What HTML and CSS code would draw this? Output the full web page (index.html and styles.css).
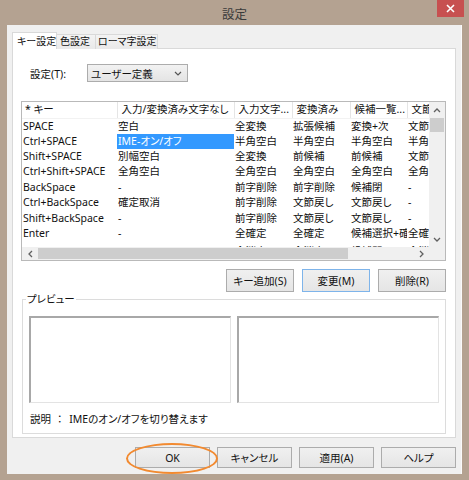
FILE: index.html
```html
<!DOCTYPE html>
<html lang="ja">
<head>
    <meta charset="UTF-8">
    <title>設定</title>
    <link rel="stylesheet" href="styles.css">
</head>
<body>
    <div class="window">
        <div class="titlebar">
            <span></span>
            <div class="title">設定</div>
            <div class="close">
                <svg width="9" height="9" viewBox="0 0 9 9"><path d="M1 1L8 8M8 1L1 8" stroke="#fff" stroke-width="1.6" fill="none"/></svg>
            </div>
        </div>
        <div class="client">
            <div class="tabs">
                <div class="tab active">キー設定</div>
                <div class="tab color">色設定</div>
                <div class="tab roma">ローマ字設定</div>
            </div>
            <div class="panel">
                <div class="setting-row">
                    <label class="setting-label">設定(T):</label>
                    <div class="select">
                        <span>ユーザー定義</span>
                        <svg width="8" height="5" viewBox="0 0 8 5"><path d="M1 1L4 4L7 1" stroke="#555" stroke-width="1.2" fill="none"/></svg>
                    </div>
                </div>

                <div class="listview">
                    <div class="lv-body">
                        <table class="keys">
                            <colgroup>
                                <col style="width:95px">
                                <col style="width:117px">
                                <col style="width:58px">
                                <col style="width:58px">
                                <col style="width:57px">
                                <col style="width:60px">
                            </colgroup>
                            <thead>
                                <tr>
                                    <th>* キー</th>
                                    <th>入力/変換済み文字なし</th>
                                    <th>入力文字...</th>
                                    <th>変換済み</th>
                                    <th>候補一覧...</th>
                                    <th>文節変換中</th>
                                </tr>
                            </thead>
                            <tbody>
                                <tr><td>SPACE</td><td>空白</td><td>全変換</td><td>拡張候補</td><td>変換+次</td><td>文節変換</td></tr>
                                <tr><td>Ctrl+SPACE</td><td class="sel">IME-オン/オフ</td><td>半角空白</td><td>半角空白</td><td>半角空白</td><td>半角空白</td></tr>
                                <tr><td>Shift+SPACE</td><td>別幅空白</td><td>全変換</td><td>前候補</td><td>前候補</td><td>文節変換</td></tr>
                                <tr><td>Ctrl+Shift+SPACE</td><td>全角空白</td><td>全角空白</td><td>全角空白</td><td>全角空白</td><td>全角空白</td></tr>
                                <tr><td>BackSpace</td><td>-</td><td>前字削除</td><td>前字削除</td><td>候補閉</td><td>-</td></tr>
                                <tr><td>Ctrl+BackSpace</td><td>確定取消</td><td>前字削除</td><td>文節戻し</td><td>文節戻し</td><td>-</td></tr>
                                <tr><td>Shift+BackSpace</td><td>-</td><td>前字削除</td><td>文節戻し</td><td>文節戻し</td><td>-</td></tr>
                                <tr><td>Enter</td><td>-</td><td>全確定</td><td>全確定</td><td>候補選択+確定</td><td>全確定</td></tr>
                                <tr class="last"><td></td><td></td><td>全消去</td><td>全消去</td><td>候補閉</td><td>全消去</td></tr>
                            </tbody>
                        </table>
                    </div>
                    <div class="vscroll">
                        <div class="arrow"><svg width="8" height="5" viewBox="0 0 8 5"><path d="M1 4L4 1L7 4" stroke="#606060" stroke-width="1.3" fill="none"/></svg></div>
                        <div class="vthumb"></div>
                        <div class="track"></div>
                        <div class="arrow"><svg width="8" height="5" viewBox="0 0 8 5"><path d="M1 1L4 4L7 1" stroke="#606060" stroke-width="1.3" fill="none"/></svg></div>
                    </div>
                    <div class="hscroll">
                        <div class="arrow"><svg width="5" height="8" viewBox="0 0 5 8"><path d="M4 1L1 4L4 7" stroke="#606060" stroke-width="1.3" fill="none"/></svg></div>
                        <div class="hthumb"></div>
                        <div class="track"></div>
                        <div class="arrow"><svg width="5" height="8" viewBox="0 0 5 8"><path d="M1 1L4 4L1 7" stroke="#606060" stroke-width="1.3" fill="none"/></svg></div>
                    </div>
                    <div class="corner"></div>
                </div>

                <div class="list-buttons">
                    <button class="btn small">キー追加(S)</button>
                    <button class="btn small focus">変更(M)</button>
                    <button class="btn small">削除(R)</button>
                </div>

                <fieldset class="preview">
                    <legend>プレビュー</legend>
                    <div class="panes">
                        <div class="pane"></div>
                        <div class="pane"></div>
                    </div>
                    <p class="desc">説明<span class="colon">：</span>IMEのオン/オフを切り替えます</p>
                </fieldset>
            </div>

            <div class="dialog-buttons">
                <button class="btn wide ok">OK</button>
                <button class="btn wide">キャンセル</button>
                <button class="btn wide">適用(A)</button>
                <button class="btn wide">ヘルプ</button>
            </div>
        </div>
    </div>
</body>
</html>
```

FILE: styles.css
```css
* {
    box-sizing: border-box;
}

body {
    margin: 0;
    background: #b4a291;
    font-family: "Noto Sans", "Noto Sans CJK JP", sans-serif;
    font-size: 10.5px;
    font-feature-settings: "palt" 1;
    color: #111;
}

.window {
    width: 469px;
    height: 480px;
}

/* title bar */
.titlebar {
    height: 25px;
    display: grid;
    grid-template-columns: 1fr auto 1fr;
    align-items: start;
}

.title {
    margin-top: 6px;
    font-family: "Noto Sans CJK JP", sans-serif;
    font-size: 12.5px;
    line-height: 16px;
    color: #3a3a3a;
}

.close {
    justify-self: end;
    width: 27px;
    height: 17px;
    margin-right: 5px;
    background: #c75050;
    display: flex;
    align-items: center;
    justify-content: center;
}

/* client area */
.client {
    margin: 0 7px;
    height: 449px;
    background: #f0f0f0;
    padding: 7px 5px 0;
    border-right: 1px solid #fafafa;
}

.tabs {
    display: flex;
    align-items: flex-end;
    height: 17px;
    margin-bottom: -1px;
    font-size: 10px;
}

.tab {
    height: 15px;
    border: 1px solid #d9d9d9;
    border-bottom: none;
    background: linear-gradient(#f3f3f3, #e9e9e9);
    padding-left: 3px;
    margin-left: -1px;
    line-height: 13px;
    white-space: nowrap;
}

.tab.active {
    position: relative;
    z-index: 1;
    width: 45px;
    height: 17px;
    margin-left: 0;
    background: #fff;
    padding-left: 4px;
    line-height: 16px;
}

.tab.color {
    width: 40px;
}

.tab.roma {
    width: 63px;
    padding-left: 2px;
}

.panel {
    height: 390px;
    background: #fff;
    border: 1px solid #d9d9d9;
    padding: 0 9px 0 8px;
}

.setting-row {
    display: flex;
    align-items: center;
    margin-top: 15px;
    height: 18px;
}

.setting-label {
    width: 57px;
    margin-left: 9px;
}

.select {
    width: 101px;
    height: 18px;
    border: 1px solid #acacac;
    background: linear-gradient(#f2f2f2, #e4e4e4);
    padding: 0 5px 0 3px;
    display: flex;
    align-items: center;
    justify-content: space-between;
}

/* list view */
.listview {
    margin-top: 19px;
    height: 160px;
    border: 1px solid #b9b9b9;
    display: grid;
    grid-template-columns: 1fr 16px;
    grid-template-rows: 1fr 13px;
}

.lv-body {
    overflow: hidden;
}

.keys {
    border-collapse: collapse;
    table-layout: fixed;
    width: 445px;
}

.keys th {
    height: 16px;
    padding: 0 0 0 4px;
    font-weight: normal;
    text-align: left;
    white-space: nowrap;
    overflow: hidden;
    line-height: 15px;
    border-right: 1px solid #e5e5e5;
    border-bottom: 1px solid #f2f2f2;
}

.keys th:first-child {
    padding-left: 3px;
}

.keys td {
    height: 15.4px;
    padding: 0 0 0 1px;
    line-height: 15px;
    white-space: nowrap;
    overflow: hidden;
}

.keys tr.last td {
    padding-top: 3px;
    vertical-align: top;
}

.keys td.sel {
    background: #3399ff;
    color: #fff;
}

.vscroll {
    background: #f0f0f0;
    display: flex;
    flex-direction: column;
}

.vscroll .arrow {
    height: 16px;
    display: flex;
    align-items: center;
    justify-content: center;
}

.vthumb {
    height: 14px;
    margin: 0 1px;
    background: #cdcdcd;
}

.track {
    flex: 1;
}

.hscroll {
    background: #f0f0f0;
    display: flex;
}

.hscroll .arrow {
    width: 16px;
    display: flex;
    align-items: center;
    justify-content: center;
}

.hthumb {
    width: 310px;
    margin: 1px 0;
    background: #cdcdcd;
}

.corner {
    background: #f0f0f0;
}

/* buttons */
.btn {
    border: 1px solid #acacac;
    background: linear-gradient(#f0f0f0, #e5e5e5);
    font: inherit;
    color: #111;
    padding: 0;
}

.btn.focus {
    border-color: #7eb4ea;
}

.list-buttons {
    display: flex;
    justify-content: flex-end;
    gap: 8px;
    margin-top: 8px;
}

.btn.small {
    width: 68px;
    height: 23px;
}

/* preview group */
.preview {
    margin: 1px 0 0 1px;
    border: 1px solid #dcdcdc;
    padding: 11px 6px 8px;
}

.preview legend {
    padding: 0 1px;
    margin-left: -3px;
    line-height: 12px;
}

.panes {
    display: grid;
    grid-template-columns: 1fr 1fr;
    gap: 6px;
}

.pane {
    height: 87px;
    background: #fff;
    border-top: 2px solid #a8a8a8;
    border-left: 2px solid #a8a8a8;
    border-right: 1px solid #e3e3e3;
    border-bottom: 1px solid #e3e3e3;
}

.desc {
    margin: 10px 0 0 1px;
    line-height: 12px;
}

.colon {
    margin: 0 7px 0 6px;
}

.dialog-buttons {
    display: flex;
    justify-content: flex-end;
    gap: 7px;
    margin-top: 9px;
}

.btn.wide {
    width: 75px;
    height: 21px;
}

.btn.ok {
    position: relative;
}

.btn.ok::after {
    content: '';
    position: absolute;
    left: -10px;
    top: -5px;
    width: 88px;
    height: 27px;
    border: 2.5px solid #f28a30;
    border-radius: 50%;
}
```
